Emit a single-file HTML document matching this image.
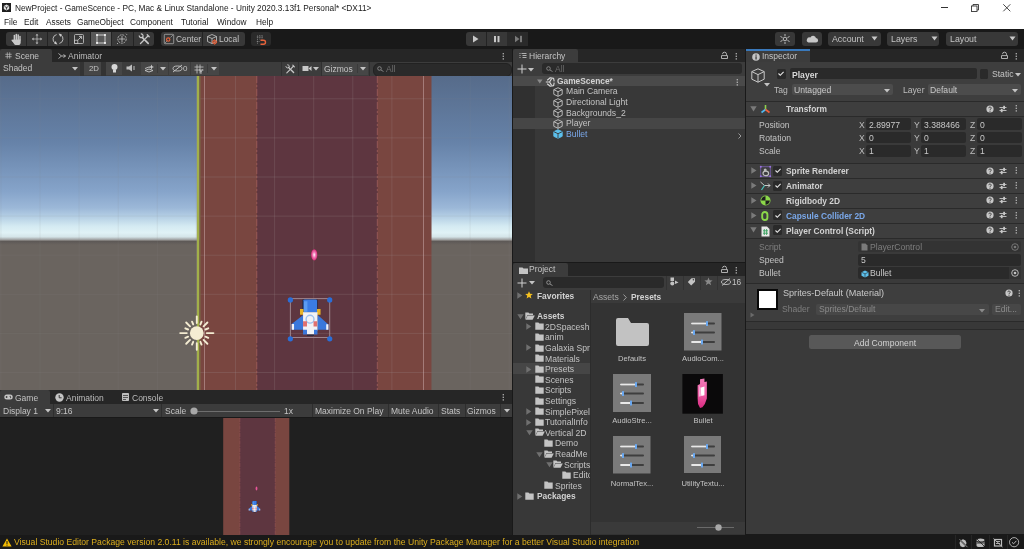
<!DOCTYPE html>
<html><head><meta charset="utf-8"><style>
html,body{margin:0;padding:0;width:1024px;height:549px;overflow:hidden;background:#191919;position:relative;}
body *{position:absolute;}
.t{font-family:"Liberation Sans",sans-serif;white-space:nowrap;will-change:transform;}
svg{overflow:visible;}
svg *{position:static;}
</style></head><body>
<div style="left:0px;top:0px;width:1024px;height:29px;background:#ffffff;"></div>
<div style="left:2px;top:3px;width:9px;height:9px;background:#1e1e1e;"></div>
<svg style="left:3px;top:4px;" width="7" height="7" viewBox="0 0 7 7"><path d="M3.5 0.6L6.2 2.1V5L3.5 6.5L0.8 5V2.1Z" fill="#e0e0e0"/><path d="M3.5 3.5L5.4 2.5M3.5 3.5V5.6M3.5 3.5L1.6 2.5" stroke="#1e1e1e" stroke-width="0.8"/></svg>
<span class="t" style="left:14.5px;top:4.47px;font-size:8.3px;line-height:8.3px;color:#1a1a1a;font-weight:400;">NewProject - GameScence - PC, Mac &amp; Linux Standalone - Unity 2020.3.13f1 Personal* &lt;DX11&gt;</span>
<span class="t" style="left:4px;top:18.47px;font-size:8.3px;line-height:8.3px;color:#1a1a1a;font-weight:400;">File</span>
<span class="t" style="left:24px;top:18.47px;font-size:8.3px;line-height:8.3px;color:#1a1a1a;font-weight:400;">Edit</span>
<span class="t" style="left:46px;top:18.47px;font-size:8.3px;line-height:8.3px;color:#1a1a1a;font-weight:400;">Assets</span>
<span class="t" style="left:77px;top:18.47px;font-size:8.3px;line-height:8.3px;color:#1a1a1a;font-weight:400;">GameObject</span>
<span class="t" style="left:130px;top:18.47px;font-size:8.3px;line-height:8.3px;color:#1a1a1a;font-weight:400;">Component</span>
<span class="t" style="left:181px;top:18.47px;font-size:8.3px;line-height:8.3px;color:#1a1a1a;font-weight:400;">Tutorial</span>
<span class="t" style="left:217px;top:18.47px;font-size:8.3px;line-height:8.3px;color:#1a1a1a;font-weight:400;">Window</span>
<span class="t" style="left:256px;top:18.47px;font-size:8.3px;line-height:8.3px;color:#1a1a1a;font-weight:400;">Help</span>
<div style="left:941.3px;top:7px;width:7px;height:0.9px;background:#333;"></div>
<svg style="left:971px;top:4px;" width="8" height="8" viewBox="0 0 8 8"><rect x="0.5" y="2" width="5.5" height="5.5" fill="none" stroke="#333" stroke-width="0.9"/><path d="M2 2V0.5H7.5V6H6" fill="none" stroke="#333" stroke-width="0.9"/></svg>
<svg style="left:1003px;top:3.8px;" width="8" height="8" viewBox="0 0 8 8"><path d="M0.3 0.3L7.3 7.3M7.3 0.3L0.3 7.3" stroke="#333" stroke-width="0.9"/></svg>
<div style="left:0px;top:29px;width:1024px;height:19.5px;background:#191919;"></div>
<div style="left:6px;top:32px;width:148px;height:14px;background:#383838;border-radius:3px"></div>
<div style="left:26px;top:32px;width:1px;height:14px;background:#232323;"></div>
<div style="left:47px;top:32px;width:1px;height:14px;background:#232323;"></div>
<div style="left:68px;top:32px;width:1px;height:14px;background:#232323;"></div>
<div style="left:90px;top:32px;width:1px;height:14px;background:#232323;"></div>
<div style="left:111px;top:32px;width:1px;height:14px;background:#232323;"></div>
<div style="left:133px;top:32px;width:1px;height:14px;background:#232323;"></div>
<div style="left:91px;top:32px;width:20px;height:14px;background:#585858;"></div>
<svg style="left:10px;top:33px;" width="13" height="13" viewBox="0 0 13 13"><g stroke="#c8c8c8" stroke-linecap="round" fill="none"><path d="M4.4 7V2.6" stroke-width="1.5"/><path d="M6.3 6.6V1.4" stroke-width="1.5"/><path d="M8.2 6.6V2" stroke-width="1.5"/><path d="M10 7V3.4" stroke-width="1.4"/><path d="M2.2 7.2L3.6 8.6" stroke-width="1.5"/></g><path d="M3.6 6.4H10.7V9.4C10.7 11 9.6 12 8 12H6.4C5.2 12 4.4 11.4 3.8 10.4L2 7.6Z" fill="#c8c8c8"/></svg>
<svg style="left:31px;top:33px;" width="12" height="12" viewBox="0 0 12 12"><path d="M6 0.8L4.6 2.6H7.4Z M6 11.2L4.6 9.4H7.4Z M0.8 6L2.6 4.6V7.4Z M11.2 6L9.4 4.6V7.4Z" fill="#c8c8c8"/><path d="M6 2.4V9.6M2.4 6H9.6" stroke="#c8c8c8" stroke-width="0.7"/></svg>
<svg style="left:52px;top:33px;" width="12" height="12" viewBox="0 0 12 12"><path d="M4.6 1.6A4.6 4.6 0 0 0 3.2 10" fill="none" stroke="#c8c8c8" stroke-width="0.9"/><path d="M7.4 10.4A4.6 4.6 0 0 0 8.8 2" fill="none" stroke="#c8c8c8" stroke-width="0.9"/><path d="M6.6 0.6L9.8 1.2L8.4 4Z M5.4 11.4L2.2 10.8L3.6 8Z" fill="#c8c8c8"/></svg>
<svg style="left:73px;top:33px;" width="12" height="12" viewBox="0 0 12 12"><rect x="1.5" y="1.5" width="9" height="9" rx="1" fill="none" stroke="#c8c8c8" stroke-width="0.8"/><rect x="1.5" y="7.2" width="3.3" height="3.3" fill="none" stroke="#c8c8c8" stroke-width="0.8"/><path d="M5.2 6.8L8.4 3.6M6 3.4H8.6V6" fill="none" stroke="#c8c8c8" stroke-width="0.9"/></svg>
<svg style="left:95px;top:33px;" width="12" height="12" viewBox="0 0 12 12"><rect x="2" y="2" width="8" height="8" fill="none" stroke="#e8e8e8" stroke-width="0.8"/><circle cx="2" cy="2" r="1" fill="#fff"/><circle cx="10" cy="2" r="1" fill="#fff"/><circle cx="2" cy="10" r="1" fill="#fff"/><circle cx="10" cy="10" r="1" fill="#fff"/></svg>
<svg style="left:116px;top:33px;" width="12" height="12" viewBox="0 0 12 12"><circle cx="6" cy="6" r="4.2" fill="none" stroke="#c8c8c8" stroke-width="0.8" stroke-dasharray="2 0.8"/><path d="M6 3V9M3 6H9" stroke="#c8c8c8" stroke-width="0.8"/><path d="M10 0.8L11 1.8M1 11L2 10" stroke="#c8c8c8" stroke-width="0.8"/></svg>
<svg style="left:138px;top:33px;" width="12" height="12" viewBox="0 0 12 12"><path d="M2.5 10.5L6.5 6.5M7.6 5.4L10.2 2.8M9.2 1.8L11.2 3.8" stroke="#c8c8c8" stroke-width="1.3" stroke-linecap="round"/><path d="M4.2 4.4L10.2 10.4" stroke="#c8c8c8" stroke-width="1.6" stroke-linecap="round"/><path d="M1.2 2.6A2 2 0 0 0 4.2 4.4L5 3.6A2 2 0 0 0 2.8 1" fill="none" stroke="#c8c8c8" stroke-width="1.2"/></svg>
<div style="left:161px;top:32px;width:84px;height:14px;background:#383838;border-radius:3px"></div>
<div style="left:202px;top:32px;width:1px;height:14px;background:#232323;"></div>
<svg style="left:163px;top:33px;" width="12" height="12" viewBox="0 0 12 12"><rect x="1.3" y="1.3" width="9.4" height="9.4" rx="0.8" fill="none" stroke="#a8a8a8" stroke-width="0.8"/><path d="M2 10L4.5 7.5M7.5 4.5L10 2" stroke="#a8a8a8" stroke-width="0.7"/><circle cx="5.2" cy="6.6" r="1.7" fill="none" stroke="#e8623a" stroke-width="1.1"/></svg>
<span class="t" style="left:175.5px;top:35.39px;font-size:8.4px;line-height:8.4px;color:#c4c4c4;font-weight:400;">Center</span>
<svg style="left:206px;top:33px;" width="12" height="12" viewBox="0 0 12 12"><path d="M1.5 3.5L6 1.5L10.5 3.5V8.5L6 10.5L1.5 8.5Z M1.5 3.5L6 5.5L10.5 3.5 M6 5.5V10.5" fill="none" stroke="#c8c8c8" stroke-width="0.8"/><circle cx="8.6" cy="9" r="1.9" fill="none" stroke="#e8623a" stroke-width="1"/><path d="M8.6 6.5V11.5M6.1 9H11.1" stroke="#e8623a" stroke-width="0.7"/></svg>
<span class="t" style="left:219px;top:35.39px;font-size:8.4px;line-height:8.4px;color:#c4c4c4;font-weight:400;">Local</span>
<div style="left:251px;top:32px;width:20px;height:14px;background:#2a2a2a;border-radius:3px"></div>
<svg style="left:256px;top:33.5px;" width="11" height="11" viewBox="0 0 11 11"><path d="M1.5 1.5V10M3.8 1V5.5M6 1V5.5" stroke="#9a9a9a" stroke-width="0.7" stroke-dasharray="1 0.8"/><path d="M0.8 3H7M0.8 7.5H3.5" stroke="#9a9a9a" stroke-width="0.7" stroke-dasharray="1 0.8"/><path d="M4.5 6.2H7.5A2 2 0 0 1 7.5 10.2H4.5" fill="none" stroke="#e8623a" stroke-width="1.4"/></svg>
<div style="left:466px;top:32px;width:62px;height:14px;background:#383838;border-radius:3px"></div>
<div style="left:486px;top:32px;width:1px;height:14px;background:#232323;"></div>
<div style="left:507px;top:32px;width:21px;height:14px;background:#2a2a2a;"></div>
<svg style="left:466px;top:32px;" width="62" height="14" viewBox="0 0 62 14"><path d="M7 3.5L12.5 7L7 10.5Z" fill="#c8c8c8"/><rect x="28" y="4" width="2" height="6.2" fill="#c8c8c8"/><rect x="31.5" y="4" width="2" height="6.2" fill="#c8c8c8"/><path d="M49 3.8L53.5 7L49 10.2Z" fill="#7a7a7a"/><rect x="54" y="3.8" width="2" height="6.4" fill="#7a7a7a"/></svg>
<div style="left:775px;top:32px;width:20px;height:14px;background:#383838;border-radius:3px"></div>
<div style="left:802px;top:32px;width:20px;height:14px;background:#383838;border-radius:3px"></div>
<div style="left:828px;top:32px;width:52.5px;height:14px;background:#383838;border-radius:3px"></div>
<div style="left:887px;top:32px;width:52px;height:14px;background:#383838;border-radius:3px"></div>
<div style="left:946px;top:32px;width:71.5px;height:14px;background:#383838;border-radius:3px"></div>
<svg style="left:779px;top:33px;" width="12" height="12" viewBox="0 0 12 12"><circle cx="6" cy="6" r="1.8" fill="none" stroke="#c8c8c8" stroke-width="0.9"/><path d="M6 1V3M6 9V11M1.5 3.5L3.5 4.6M10.5 3.5L8.5 4.6M1.5 8.5L3.5 7.4M10.5 8.5L8.5 7.4" stroke="#c8c8c8" stroke-width="0.9"/></svg>
<svg style="left:806px;top:33px;" width="12" height="12" viewBox="0 0 12 12"><path d="M2.5 9.5H9.8A2.2 2.2 0 0 0 10 5.1A3 3 0 0 0 4.3 4.6A2.5 2.5 0 0 0 2.5 9.5Z" fill="#c8c8c8"/></svg>
<span class="t" style="left:832px;top:35.05px;font-size:8.8px;line-height:8.8px;color:#c4c4c4;font-weight:400;">Account</span>
<span class="t" style="left:891px;top:35.05px;font-size:8.8px;line-height:8.8px;color:#c4c4c4;font-weight:400;">Layers</span>
<span class="t" style="left:949.5px;top:35.05px;font-size:8.8px;line-height:8.8px;color:#c4c4c4;font-weight:400;">Layout</span>
<svg style="left:871px;top:36px;" width="7" height="5" viewBox="0 0 7 5"><path d="M0.5 0.5H6.5L3.5 4.5Z" fill="#c8c8c8"/></svg>
<svg style="left:931px;top:36px;" width="7" height="5" viewBox="0 0 7 5"><path d="M0.5 0.5H6.5L3.5 4.5Z" fill="#c8c8c8"/></svg>
<svg style="left:1009px;top:36px;" width="7" height="5" viewBox="0 0 7 5"><path d="M0.5 0.5H6.5L3.5 4.5Z" fill="#c8c8c8"/></svg>
<div style="left:0px;top:48.5px;width:512px;height:13px;background:#262626;"></div>
<div style="left:0;top:49px;width:51.5px;height:12.5px;background:#3c3c3c;border-radius:2px 2px 0 0"></div>
<svg style="left:4.5px;top:51.5px;" width="7" height="7" viewBox="0 0 7 7"><path d="M2.3 0.3V6.7M4.7 0.3V6.7M0.3 2.3H6.7M0.3 4.7H6.7" stroke="#bdbdbd" stroke-width="0.7"/></svg>
<span class="t" style="left:15px;top:52.05px;font-size:8.5px;line-height:8.5px;color:#c4c4c4;font-weight:400;">Scene</span>
<svg style="left:58px;top:53px;" width="8" height="6" viewBox="0 0 8 6"><path d="M0.5 0.5L3.5 3L0.5 5.5M3.5 3H7.5M5.5 1.5L7.5 3L5.5 4.5" stroke="#bdbdbd" stroke-width="0.9" fill="none"/></svg>
<span class="t" style="left:68px;top:52.05px;font-size:8.5px;line-height:8.5px;color:#bdbdbd;font-weight:400;">Animator</span>
<svg style="left:502px;top:51.5px;" width="3" height="9" viewBox="0 0 3 9"><rect x="0.7" y="1" width="1.1" height="1.4" fill="#c4c4c4"/><rect x="0.7" y="3.6" width="1.1" height="1.4" fill="#c4c4c4"/><rect x="0.7" y="6.2" width="1.1" height="1.4" fill="#c4c4c4"/></svg>
<div style="left:0px;top:61.5px;width:512px;height:14px;background:#3c3c3c;"></div>
<span class="t" style="left:3px;top:64.30px;font-size:8.5px;line-height:8.5px;color:#c4c4c4;font-weight:400;">Shaded</span>
<svg style="left:72px;top:67px;" width="6" height="4" viewBox="0 0 6 4"><path d="M0 0H6L3 3.6Z" fill="#c4c4c4"/></svg>
<div style="left:80px;top:61.5px;width:4px;height:14px;background:#333333;"></div>
<div style="left:84px;top:62px;width:17px;height:13px;background:#464646;"></div>
<span class="t" style="left:89px;top:64.90px;font-size:7.8px;line-height:7.8px;color:#c4c4c4;font-weight:400;">2D</span>
<div style="left:101px;top:61.5px;width:5px;height:14px;background:#333333;"></div>
<div style="left:106px;top:62px;width:16px;height:13px;background:#464646;"></div>
<svg style="left:110px;top:63px;" width="9" height="11" viewBox="0 0 9 11"><circle cx="4.5" cy="4" r="3" fill="#d8d8d8"/><rect x="3" y="6.5" width="3" height="3" fill="#d8d8d8"/></svg>
<svg style="left:126px;top:64px;" width="10" height="8" viewBox="0 0 10 8"><path d="M0.5 2.5H3L6 0.5V7.5L3 5.5H0.5Z" fill="#bdbdbd"/><path d="M8 2V6" stroke="#bdbdbd" stroke-width="1"/></svg>
<div style="left:140.5px;top:62px;width:27.5px;height:13px;background:#464646;"></div>
<svg style="left:144px;top:63.5px;" width="10" height="10" viewBox="0 0 10 10"><path d="M1 6.5L5 5L9 6.5L5 8Z M1 4.5L5 3L6 3.4" fill="none" stroke="#c8c8c8" stroke-width="0.9"/><path d="M7.5 0.5L8.2 2.3L10 3L8.2 3.7L7.5 5.5L6.8 3.7L5 3L6.8 2.3Z" fill="#c8c8c8"/></svg>
<div style="left:157px;top:64px;width:0.7px;height:9px;background:#3a3a3a;"></div>
<svg style="left:159.5px;top:67px;" width="6" height="4" viewBox="0 0 6 4"><path d="M0 0H6L3 3.6Z" fill="#c4c4c4"/></svg>
<div style="left:169px;top:62px;width:21px;height:13px;background:#464646;"></div>
<svg style="left:172px;top:64px;" width="11" height="9" viewBox="0 0 11 9"><ellipse cx="5.5" cy="4.5" rx="4.5" ry="2.5" fill="none" stroke="#c8c8c8" stroke-width="0.9"/><path d="M1 8L10 1" stroke="#c8c8c8" stroke-width="0.9"/></svg>
<span class="t" style="left:183px;top:65.23px;font-size:8px;line-height:8px;color:#c4c4c4;font-weight:400;">0</span>
<div style="left:191px;top:62px;width:28px;height:13px;background:#464646;"></div>
<svg style="left:194px;top:63.5px;" width="10" height="10" viewBox="0 0 10 10"><path d="M3 0.5V9.5M6 0.5V9.5M0.5 3H9.5M0.5 6H9.5" stroke="#c8c8c8" stroke-width="0.8"/><path d="M5.5 5.5L7 8L8.5 5.5M7 8V9.8" stroke="#c8c8c8" stroke-width="0.9" fill="none"/></svg>
<div style="left:207px;top:64px;width:0.7px;height:9px;background:#3a3a3a;"></div>
<svg style="left:210.5px;top:67px;" width="6" height="4" viewBox="0 0 6 4"><path d="M0 0H6L3 3.6Z" fill="#c4c4c4"/></svg>
<div style="left:219px;top:61.5px;width:62px;height:14px;background:#3c3c3c;"></div>
<div style="left:281px;top:62px;width:17px;height:13px;background:#3c3c3c;"></div>
<svg style="left:284.5px;top:63.5px;" width="10" height="10" viewBox="0 0 10 10"><path d="M1.8 8.8L5.3 5.3M6.3 4.3L8.6 2M7.8 1.2L9.4 2.8" stroke="#c8c8c8" stroke-width="1.1" stroke-linecap="round"/><path d="M3.6 3.6L8.6 8.6" stroke="#c8c8c8" stroke-width="1.4" stroke-linecap="round"/><path d="M0.9 2.2A1.7 1.7 0 0 0 3.6 3.6L4.2 3A1.7 1.7 0 0 0 2.3 0.8" fill="none" stroke="#c8c8c8" stroke-width="1"/></svg>
<div style="left:280.5px;top:61.5px;width:0.8px;height:14px;background:#303030;"></div>
<div style="left:298px;top:61.5px;width:0.8px;height:14px;background:#303030;"></div>
<div style="left:321.3px;top:61.5px;width:0.8px;height:14px;background:#303030;"></div>
<div style="left:369px;top:61.5px;width:0.8px;height:14px;background:#303030;"></div>
<svg style="left:302px;top:65px;" width="10" height="7" viewBox="0 0 10 7"><rect x="0.5" y="1" width="6" height="5" fill="#c8c8c8"/><path d="M6.5 3.5L9.5 1V6Z" fill="#c8c8c8"/></svg>
<svg style="left:313px;top:67px;" width="6" height="4" viewBox="0 0 6 4"><path d="M0 0H6L3 3.6Z" fill="#c4c4c4"/></svg>
<div style="left:322px;top:62px;width:46px;height:13px;background:#464646;"></div>
<span class="t" style="left:324px;top:64.50px;font-size:8.5px;line-height:8.5px;color:#c4c4c4;font-weight:400;">Gizmos</span>
<div style="left:357px;top:64px;width:0.7px;height:9px;background:#3a3a3a;"></div>
<svg style="left:359.5px;top:67px;" width="6" height="4" viewBox="0 0 6 4"><path d="M0 0H6L3 3.6Z" fill="#c4c4c4"/></svg>
<div style="left:373px;top:62.5px;width:137px;height:12px;background:#2a2a2a;border-radius:6px;border:0.5px solid #222"></div>
<svg style="left:377px;top:65.5px;" width="8" height="6" viewBox="0 0 8 6"><circle cx="2.5" cy="2.5" r="1.8" fill="none" stroke="#8a8a8a" stroke-width="0.9"/><path d="M4 4L6.5 5.5" stroke="#8a8a8a" stroke-width="0.9"/></svg>
<span class="t" style="left:386px;top:64.80px;font-size:8.5px;line-height:8.5px;color:#6e6e6e;font-weight:400;">All</span>
<svg style="left:0;top:75.5px" width="512" height="314.5" viewBox="0 0 512 314.5"><defs><linearGradient id="sky" x1="0" y1="0" x2="0" y2="1"><stop offset="0" stop-color="#566b8a"/><stop offset="0.4" stop-color="#6682a8"/><stop offset="0.7" stop-color="#86a4ca"/><stop offset="0.8" stop-color="#9cb8d8"/><stop offset="0.86" stop-color="#b8d2e6"/><stop offset="0.91" stop-color="#d4eaf2"/><stop offset="0.95" stop-color="#e0f2f6"/><stop offset="0.975" stop-color="#d4e4e8"/><stop offset="0.992" stop-color="#a0a2a2"/><stop offset="1" stop-color="#6e6864"/></linearGradient><linearGradient id="gnd" x1="0" y1="0" x2="0" y2="1"><stop offset="0" stop-color="#5c5856"/><stop offset="1" stop-color="#6a645f"/></linearGradient></defs><rect x="0" y="0" width="512" height="165" fill="url(#sky)"/><rect x="0" y="165" width="512" height="150" fill="#6a645f"/><rect x="0" y="165" width="512" height="4" fill="url(#gnd)"/><rect x="0.40" y="0" width="1" height="315" fill="#8c8c8c" fill-opacity="0.12"/><rect x="39.50" y="0" width="1" height="315" fill="#8c8c8c" fill-opacity="0.12"/><rect x="78.60" y="0" width="1" height="315" fill="#8c8c8c" fill-opacity="0.12"/><rect x="117.70" y="0" width="1" height="315" fill="#8c8c8c" fill-opacity="0.12"/><rect x="156.80" y="0" width="1" height="315" fill="#8c8c8c" fill-opacity="0.12"/><rect x="195.90" y="0" width="1" height="315" fill="#8c8c8c" fill-opacity="0.12"/><rect x="235.00" y="0" width="1" height="315" fill="#8c8c8c" fill-opacity="0.12"/><rect x="274.10" y="0" width="1" height="315" fill="#8c8c8c" fill-opacity="0.12"/><rect x="313.20" y="0" width="1" height="315" fill="#8c8c8c" fill-opacity="0.12"/><rect x="352.30" y="0" width="1" height="315" fill="#8c8c8c" fill-opacity="0.12"/><rect x="391.40" y="0" width="1" height="315" fill="#8c8c8c" fill-opacity="0.12"/><rect x="430.50" y="0" width="1" height="315" fill="#8c8c8c" fill-opacity="0.12"/><rect x="469.60" y="0" width="1" height="315" fill="#8c8c8c" fill-opacity="0.12"/><rect x="508.70" y="0" width="1" height="315" fill="#8c8c8c" fill-opacity="0.12"/><rect x="0" y="22.30" width="512" height="1" fill="#8c8c8c" fill-opacity="0.12"/><rect x="0" y="61.40" width="512" height="1" fill="#8c8c8c" fill-opacity="0.12"/><rect x="0" y="100.50" width="512" height="1" fill="#8c8c8c" fill-opacity="0.12"/><rect x="0" y="139.60" width="512" height="1" fill="#8c8c8c" fill-opacity="0.12"/><rect x="0" y="178.70" width="512" height="1" fill="#8c8c8c" fill-opacity="0.12"/><rect x="0" y="217.80" width="512" height="1" fill="#8c8c8c" fill-opacity="0.12"/><rect x="0" y="256.90" width="512" height="1" fill="#8c8c8c" fill-opacity="0.12"/><rect x="0" y="296.00" width="512" height="1" fill="#8c8c8c" fill-opacity="0.12"/><rect x="200" y="0" width="231.5" height="315" fill="#794640"/><rect x="257" y="0" width="120.5" height="315" fill="#5e3640"/><rect x="195.90" y="0" width="1" height="315" fill="#a09090" fill-opacity="0.22"/><rect x="235.00" y="0" width="1" height="315" fill="#a09090" fill-opacity="0.22"/><rect x="274.10" y="0" width="1" height="315" fill="#a09090" fill-opacity="0.22"/><rect x="313.20" y="0" width="1" height="315" fill="#a09090" fill-opacity="0.22"/><rect x="352.30" y="0" width="1" height="315" fill="#a09090" fill-opacity="0.22"/><rect x="391.40" y="0" width="1" height="315" fill="#a09090" fill-opacity="0.22"/><rect x="199.5" y="22.30" width="232" height="1" fill="#a09090" fill-opacity="0.22"/><rect x="199.5" y="61.40" width="232" height="1" fill="#a09090" fill-opacity="0.22"/><rect x="199.5" y="100.50" width="232" height="1" fill="#a09090" fill-opacity="0.22"/><rect x="199.5" y="139.60" width="232" height="1" fill="#a09090" fill-opacity="0.22"/><rect x="199.5" y="178.70" width="232" height="1" fill="#a09090" fill-opacity="0.22"/><rect x="199.5" y="217.80" width="232" height="1" fill="#a09090" fill-opacity="0.22"/><rect x="199.5" y="256.90" width="232" height="1" fill="#a09090" fill-opacity="0.22"/><rect x="199.5" y="296.00" width="232" height="1" fill="#a09090" fill-opacity="0.22"/><path d="M256.8 0V315M377.3 0V315" stroke="#a8625f" stroke-width="1" stroke-dasharray="7 2 2 2" stroke-opacity="0.7"/><rect x="204" y="0" width="1" height="315" fill="#d0b0b0" fill-opacity="0.5"/><rect x="423" y="0" width="1" height="315" fill="#d0b0b0" fill-opacity="0.5"/><rect x="196.9" y="0" width="2.2" height="315" fill="#a2b04a"/><rect x="199.1" y="0" width="1.4" height="315" fill="#7a6a44"/><g transform="translate(196.8,257.1)" stroke="#f4ecd2" stroke-width="1.9" stroke-linecap="round"><line x1="10.00" y1="0.00" x2="16.60" y2="0.00"/><line x1="8.68" y1="3.60" x2="11.46" y2="4.75"/><line x1="6.79" y1="6.79" x2="10.61" y2="10.61"/><line x1="3.60" y1="8.68" x2="4.75" y2="11.46"/><line x1="0.00" y1="10.00" x2="0.00" y2="16.60"/><line x1="-3.60" y1="8.68" x2="-4.75" y2="11.46"/><line x1="-6.79" y1="6.79" x2="-10.61" y2="10.61"/><line x1="-8.68" y1="3.60" x2="-11.46" y2="4.75"/><line x1="-10.00" y1="0.00" x2="-16.60" y2="0.00"/><line x1="-8.68" y1="-3.60" x2="-11.46" y2="-4.75"/><line x1="-6.79" y1="-6.79" x2="-10.61" y2="-10.61"/><line x1="-3.60" y1="-8.68" x2="-4.75" y2="-11.46"/><line x1="-0.00" y1="-10.00" x2="-0.00" y2="-16.60"/><line x1="3.60" y1="-8.68" x2="4.75" y2="-11.46"/><line x1="6.79" y1="-6.79" x2="10.61" y2="-10.61"/><line x1="8.68" y1="-3.60" x2="11.46" y2="-4.75"/></g><circle cx="196.8" cy="257.1" r="6.9" fill="#f4ecd2"/><defs><radialGradient id="bul"><stop offset="0" stop-color="#ffffff"/><stop offset="0.45" stop-color="#f080b8"/><stop offset="1" stop-color="#d82a78"/></radialGradient></defs><ellipse cx="314.2" cy="178.8" rx="3.1" ry="5.6" fill="url(#bul)"/></svg>
<svg style="left:286px;top:296px" width="48" height="48" viewBox="0 0 549 549"><rect x="50" y="30" width="450" height="445" fill="none" stroke="#a08890" stroke-width="11"/><path d="M188 40H362V190H188Z" fill="#1c2a48"/><path d="M200 48Q200 40 215 40H340Q355 40 355 55V185H200Z" fill="#3b7ce4"/><rect x="205" y="60" width="40" height="120" fill="#5b9cf2"/><path d="M160 150H200V215H160Z M355 150H395V215H355Z" fill="#e8b428"/><path d="M200 215L65 320V385H200Z M360 215L485 325V385H360Z" fill="#3a78dc"/><path d="M65 320H92V385H65Z M460 322H485V385H460Z" fill="#f4f4f8"/><path d="M195 185H360V395H195Z" fill="#f2f2f6"/><circle cx="275" cy="265" r="45" fill="none" stroke="#9cc0f0" stroke-width="16"/><path d="M195 290H240V350H195Z M315 290H355V350H315Z" fill="#e07070"/><path d="M195 385H240V440H195Z M320 385H360V440H320Z" fill="#3a78dc"/><path d="M240 385H320V440H240Z" fill="#f2f2f6"/><path d="M240 440H320V458H240Z" fill="#2a2a40"/><circle cx="50" cy="45" r="30" fill="#2a6ed8"/><circle cx="500" cy="45" r="30" fill="#2a6ed8"/><circle cx="50" cy="490" r="30" fill="#2a6ed8"/><circle cx="500" cy="490" r="30" fill="#2a6ed8"/></svg>
<div style="left:0px;top:389.7px;width:512px;height:14.1px;background:#262626;"></div>
<div style="left:0;top:390px;width:49.5px;height:13.8px;background:#3c3c3c;border-radius:2px 2px 0 0"></div>
<svg style="left:4px;top:394px;" width="9" height="6" viewBox="0 0 9 6"><rect x="0.3" y="0.5" width="8.4" height="5" rx="2.5" fill="#c4c4c4"/><circle cx="2.6" cy="3" r="0.9" fill="#3c3c3c"/><circle cx="6.2" cy="2.4" r="0.6" fill="#3c3c3c"/><circle cx="6.6" cy="3.6" r="0.6" fill="#3c3c3c"/></svg>
<span class="t" style="left:15px;top:394.20px;font-size:8.5px;line-height:8.5px;color:#c4c4c4;font-weight:400;">Game</span>
<svg style="left:55px;top:393px;" width="9" height="9" viewBox="0 0 9 9"><circle cx="4.5" cy="4.5" r="4.2" fill="#c4c4c4"/><path d="M4.2 2V4.8H6.6" stroke="#262626" stroke-width="0.9" fill="none"/></svg>
<span class="t" style="left:66px;top:394.20px;font-size:8.5px;line-height:8.5px;color:#bdbdbd;font-weight:400;">Animation</span>
<svg style="left:122px;top:393px;" width="7" height="8" viewBox="0 0 7 8"><rect x="0" y="0" width="7" height="8" rx="0.8" fill="#bdbdbd"/><path d="M1 2.5H6M1 4.5H6M1 6.5H4" stroke="#262626" stroke-width="0.7"/></svg>
<span class="t" style="left:132px;top:394.20px;font-size:8.5px;line-height:8.5px;color:#bdbdbd;font-weight:400;">Console</span>
<svg style="left:502px;top:393px;" width="3" height="9" viewBox="0 0 3 9"><rect x="0.7" y="1" width="1.1" height="1.4" fill="#c4c4c4"/><rect x="0.7" y="3.6" width="1.1" height="1.4" fill="#c4c4c4"/><rect x="0.7" y="6.2" width="1.1" height="1.4" fill="#c4c4c4"/></svg>
<div style="left:0px;top:403.8px;width:512px;height:13.7px;background:#3c3c3c;"></div>
<div style="left:52.5px;top:403.8px;width:1px;height:13.7px;background:#2e2e2e;"></div>
<div style="left:160.5px;top:403.8px;width:1px;height:13.7px;background:#2e2e2e;"></div>
<div style="left:311.5px;top:403.8px;width:1px;height:13.7px;background:#2e2e2e;"></div>
<div style="left:387.5px;top:403.8px;width:1px;height:13.7px;background:#2e2e2e;"></div>
<div style="left:438px;top:403.8px;width:1px;height:13.7px;background:#2e2e2e;"></div>
<div style="left:464.5px;top:403.8px;width:1px;height:13.7px;background:#2e2e2e;"></div>
<div style="left:500px;top:403.8px;width:1px;height:13.7px;background:#2e2e2e;"></div>
<span class="t" style="left:3px;top:407.10px;font-size:8.5px;line-height:8.5px;color:#c4c4c4;font-weight:400;">Display 1</span>
<svg style="left:45px;top:409px;" width="6" height="4" viewBox="0 0 6 4"><path d="M0 0H6L3 3.6Z" fill="#c4c4c4"/></svg>
<span class="t" style="left:56px;top:407.10px;font-size:8.5px;line-height:8.5px;color:#c4c4c4;font-weight:400;">9:16</span>
<svg style="left:152.5px;top:409px;" width="6" height="4" viewBox="0 0 6 4"><path d="M0 0H6L3 3.6Z" fill="#c4c4c4"/></svg>
<span class="t" style="left:165px;top:407.30px;font-size:8.5px;line-height:8.5px;color:#c4c4c4;font-weight:400;">Scale</span>
<div style="left:193px;top:410.5px;width:87px;height:1px;background:#6e6e6e;"></div>
<svg style="left:189.5px;top:407px;" width="8" height="8" viewBox="0 0 8 8"><circle cx="4" cy="4" r="3.6" fill="#a8a8a8"/></svg>
<span class="t" style="left:284px;top:407.30px;font-size:8.5px;line-height:8.5px;color:#c4c4c4;font-weight:400;">1x</span>
<span class="t" style="left:315px;top:407.10px;font-size:8.5px;line-height:8.5px;color:#c4c4c4;font-weight:400;">Maximize On Play</span>
<span class="t" style="left:391px;top:407.10px;font-size:8.5px;line-height:8.5px;color:#c4c4c4;font-weight:400;">Mute Audio</span>
<span class="t" style="left:441px;top:407.10px;font-size:8.5px;line-height:8.5px;color:#c4c4c4;font-weight:400;">Stats</span>
<span class="t" style="left:467px;top:407.10px;font-size:8.5px;line-height:8.5px;color:#c4c4c4;font-weight:400;">Gizmos</span>
<svg style="left:504px;top:409px;" width="6" height="4" viewBox="0 0 6 4"><path d="M0 0H6L3 3.6Z" fill="#c4c4c4"/></svg>
<div style="left:0px;top:417.5px;width:512px;height:117px;background:#202020;"></div>
<svg style="left:0;top:417.5px" width="512" height="117" viewBox="0 0 512 117"><rect x="223.2" y="0" width="66.1" height="117" fill="#794640"/><rect x="239.9" y="0" width="35.3" height="117" fill="#5e3640"/><path d="M239.9 0V117M275.2 0V117" stroke="#a45c5e" stroke-width="0.6" stroke-dasharray="4 1 1.5 1" stroke-opacity="0.7"/><ellipse cx="256.5" cy="70.4" rx="0.9" ry="2" fill="#e8559a"/></svg>
<svg style="left:247.3px;top:500px" width="14.9" height="14.9" viewBox="0 0 549 549"><path d="M188 40H362V190H188Z" fill="#1c2a48"/><path d="M200 48Q200 40 215 40H340Q355 40 355 55V185H200Z" fill="#3b7ce4"/><rect x="205" y="60" width="40" height="120" fill="#5b9cf2"/><path d="M160 150H200V215H160Z M355 150H395V215H355Z" fill="#e8b428"/><path d="M200 215L65 320V385H200Z M360 215L485 325V385H360Z" fill="#3a78dc"/><path d="M65 320H92V385H65Z M460 322H485V385H460Z" fill="#f4f4f8"/><path d="M195 185H360V395H195Z" fill="#f2f2f6"/><circle cx="275" cy="265" r="45" fill="none" stroke="#9cc0f0" stroke-width="16"/><path d="M195 290H240V350H195Z M315 290H355V350H315Z" fill="#e07070"/><path d="M195 385H240V440H195Z M320 385H360V440H320Z" fill="#3a78dc"/><path d="M240 385H320V440H240Z" fill="#f2f2f6"/><path d="M240 440H320V458H240Z" fill="#2a2a40"/></svg>
<div style="left:512px;top:48.5px;width:1px;height:486px;background:#191919;"></div>
<div style="left:513px;top:48.5px;width:231.5px;height:13px;background:#262626;"></div>
<div style="left:513px;top:49px;width:64.5px;height:12.6px;background:#3c3c3c;border-radius:2px 2px 0 0"></div>
<svg style="left:519px;top:53px;" width="8" height="6" viewBox="0 0 8 6"><path d="M0.5 0.5H1.5M0.5 2.5H1.5M0.5 4.5H1.5M2.5 0.5H7.5M3.5 2.5H7.5M3.5 4.5H7.5" stroke="#bdbdbd" stroke-width="0.9"/></svg>
<span class="t" style="left:529px;top:51.80px;font-size:8.5px;line-height:8.5px;color:#c4c4c4;font-weight:400;">Hierarchy</span>
<svg style="left:720.5px;top:51.5px;" width="7" height="7" viewBox="0 0 7 7"><path d="M1.5 2.2A2 2 0 0 1 5.5 2.2V3.6" fill="none" stroke="#bdbdbd" stroke-width="0.9"/><path d="M0.5 3.6H6.5V6.5H0.5Z" fill="none" stroke="#bdbdbd" stroke-width="0.9"/></svg>
<svg style="left:735px;top:51.5px;" width="3" height="9" viewBox="0 0 3 9"><rect x="0.7" y="1" width="1.1" height="1.4" fill="#c4c4c4"/><rect x="0.7" y="3.6" width="1.1" height="1.4" fill="#c4c4c4"/><rect x="0.7" y="6.2" width="1.1" height="1.4" fill="#c4c4c4"/></svg>
<div style="left:513px;top:61.6px;width:231.5px;height:14.4px;background:#3c3c3c;"></div>
<svg style="left:517px;top:64px;" width="10" height="10" viewBox="0 0 10 10"><path d="M5 0.5V9.5M0.5 5H9.5" stroke="#d0d0d0" stroke-width="1"/></svg>
<svg style="left:528px;top:67.5px;" width="6" height="4" viewBox="0 0 6 4"><path d="M0 0H6L3 3.6Z" fill="#c4c4c4"/></svg>
<div style="left:542.3px;top:62.9px;width:200px;height:10.9px;background:#2a2a2a;border-radius:3px"></div>
<svg style="left:546px;top:65.5px;" width="8" height="6" viewBox="0 0 8 6"><circle cx="2.5" cy="2.5" r="1.8" fill="none" stroke="#8a8a8a" stroke-width="0.9"/><path d="M4 4L6.5 5.5" stroke="#8a8a8a" stroke-width="0.9"/></svg>
<span class="t" style="left:554.5px;top:65.10px;font-size:8.5px;line-height:8.5px;color:#6a6a6a;font-weight:400;">All</span>
<div style="left:513px;top:76px;width:231.5px;height:458.5px;background:#383838;"></div>
<div style="left:513px;top:86px;width:21.5px;height:448.5px;background:#303030;"></div>
<div style="left:513px;top:76px;width:231.5px;height:9.7px;background:#4a4a4a;"></div>
<svg style="left:537px;top:79px;" width="6" height="5" viewBox="0 0 6 5"><path d="M0 0.5H5.5L2.75 4.5Z" fill="#8a8a8a"/></svg>
<svg style="left:544.5px;top:76.5px;" width="10" height="10" viewBox="0 0 10 10"><g fill="none" stroke="#d8d8d8" stroke-width="1.1" stroke-linejoin="round"><path d="M0.8 5H4.6L6.6 1.6M4.6 5L6.6 8.4"/><path d="M2.2 3.2L5.2 0.8L8.6 1.4L9.2 4.4M9.2 5.6L8.6 8.6L5.2 9.2L2.2 6.8"/></g></svg>
<span class="t" style="left:556.5px;top:76.99px;font-size:8.4px;line-height:8.4px;color:#d2d2d2;font-weight:700;">GameScence*</span>
<svg style="left:735.5px;top:78px;" width="3" height="9" viewBox="0 0 3 9"><rect x="0.7" y="1" width="1.1" height="1.4" fill="#c4c4c4"/><rect x="0.7" y="3.6" width="1.1" height="1.4" fill="#c4c4c4"/><rect x="0.7" y="6.2" width="1.1" height="1.4" fill="#c4c4c4"/></svg>
<div style="left:513px;top:118px;width:231.5px;height:10.7px;background:#464646;"></div>
<svg style="left:553px;top:87.1px;" width="10" height="10" viewBox="0 0 10 10"><path d="M5 0.7L9.2 2.7V7.3L5 9.3L0.8 7.3V2.7Z" fill="none" stroke="#c4c4c4" stroke-width="0.9"/><path d="M0.8 2.7L5 4.7L9.2 2.7M5 4.7V9.3" fill="none" stroke="#c4c4c4" stroke-width="0.9"/></svg>
<span class="t" style="left:565.6px;top:87.22px;font-size:8.6px;line-height:8.6px;color:#c4c4c4;font-weight:400;">Main Camera</span>
<svg style="left:553px;top:97.75px;" width="10" height="10" viewBox="0 0 10 10"><path d="M5 0.7L9.2 2.7V7.3L5 9.3L0.8 7.3V2.7Z" fill="none" stroke="#c4c4c4" stroke-width="0.9"/><path d="M0.8 2.7L5 4.7L9.2 2.7M5 4.7V9.3" fill="none" stroke="#c4c4c4" stroke-width="0.9"/></svg>
<span class="t" style="left:565.6px;top:97.87px;font-size:8.6px;line-height:8.6px;color:#c4c4c4;font-weight:400;">Directional Light</span>
<svg style="left:553px;top:108.39999999999999px;" width="10" height="10" viewBox="0 0 10 10"><path d="M5 0.7L9.2 2.7V7.3L5 9.3L0.8 7.3V2.7Z" fill="none" stroke="#c4c4c4" stroke-width="0.9"/><path d="M0.8 2.7L5 4.7L9.2 2.7M5 4.7V9.3" fill="none" stroke="#c4c4c4" stroke-width="0.9"/></svg>
<span class="t" style="left:565.6px;top:108.52px;font-size:8.6px;line-height:8.6px;color:#c4c4c4;font-weight:400;">Backgrounds_2</span>
<svg style="left:553px;top:119.05px;" width="10" height="10" viewBox="0 0 10 10"><path d="M5 0.7L9.2 2.7V7.3L5 9.3L0.8 7.3V2.7Z" fill="none" stroke="#c4c4c4" stroke-width="0.9"/><path d="M0.8 2.7L5 4.7L9.2 2.7M5 4.7V9.3" fill="none" stroke="#c4c4c4" stroke-width="0.9"/></svg>
<span class="t" style="left:565.6px;top:119.17px;font-size:8.6px;line-height:8.6px;color:#c4c4c4;font-weight:400;">Player</span>
<svg style="left:553px;top:129.4px;" width="10" height="10" viewBox="0 0 10 10"><path d="M5 0.7L9.2 2.7V7.3L5 9.3L0.8 7.3V2.7Z" fill="#5cc0ec" stroke="#5cc0ec" stroke-width="0.9"/><path d="M0.8 2.7L5 4.7L9.2 2.7M5 4.7V9.3" fill="none" stroke="#383838" stroke-width="0.9"/></svg>
<span class="t" style="left:565.6px;top:129.52px;font-size:8.6px;line-height:8.6px;color:#7aa8ea;font-weight:400;">Bullet</span>
<svg style="left:738px;top:132.5px;" width="4" height="6" viewBox="0 0 4 6"><path d="M0.5 0.5L3 3L0.5 5.5" fill="none" stroke="#a8a8a8" stroke-width="0.9"/></svg>
<div style="left:513px;top:261.5px;width:231.5px;height:2px;background:#191919;"></div>
<div style="left:513px;top:263.3px;width:231.5px;height:12.3px;background:#262626;"></div>
<div style="left:513px;top:263.3px;width:54.7px;height:12.3px;background:#3c3c3c;border-radius:2px 2px 0 0"></div>
<svg style="left:519px;top:266.5px;" width="9" height="7" viewBox="0 0 9 7"><path d="M0 0.5H3.5L4.5 1.5H9V7H0Z" fill="#c4c4c4"/></svg>
<span class="t" style="left:529px;top:265.40px;font-size:8.5px;line-height:8.5px;color:#c4c4c4;font-weight:400;">Project</span>
<svg style="left:720.5px;top:266px;" width="7" height="7" viewBox="0 0 7 7"><path d="M1.5 2.2A2 2 0 0 1 5.5 2.2V3.6" fill="none" stroke="#bdbdbd" stroke-width="0.9"/><path d="M0.5 3.6H6.5V6.5H0.5Z" fill="none" stroke="#bdbdbd" stroke-width="0.9"/></svg>
<svg style="left:735px;top:266px;" width="3" height="9" viewBox="0 0 3 9"><rect x="0.7" y="1" width="1.1" height="1.4" fill="#c4c4c4"/><rect x="0.7" y="3.6" width="1.1" height="1.4" fill="#c4c4c4"/><rect x="0.7" y="6.2" width="1.1" height="1.4" fill="#c4c4c4"/></svg>
<div style="left:513px;top:275.5px;width:231.5px;height:14px;background:#3c3c3c;"></div>
<svg style="left:517px;top:278px;" width="10" height="10" viewBox="0 0 10 10"><path d="M5 0.5V9.5M0.5 5H9.5" stroke="#d0d0d0" stroke-width="1"/></svg>
<svg style="left:528.5px;top:281px;" width="6" height="4" viewBox="0 0 6 4"><path d="M0 0H6L3 3.6Z" fill="#c4c4c4"/></svg>
<div style="left:543px;top:277px;width:120.7px;height:10.5px;background:#2a2a2a;border-radius:3px"></div>
<svg style="left:546px;top:279.5px;" width="8" height="6" viewBox="0 0 8 6"><circle cx="2.5" cy="2.5" r="1.8" fill="none" stroke="#9a9a9a" stroke-width="0.9"/><path d="M4 4L6.5 5.5" stroke="#9a9a9a" stroke-width="0.9"/></svg>
<div style="left:665.5px;top:276px;width:0.8px;height:13.5px;background:#333333;"></div>
<div style="left:682.5px;top:276px;width:0.8px;height:13.5px;background:#333333;"></div>
<div style="left:700px;top:276px;width:0.8px;height:13.5px;background:#333333;"></div>
<div style="left:717px;top:276px;width:0.8px;height:13.5px;background:#333333;"></div>
<svg style="left:670px;top:277px;" width="9" height="9" viewBox="0 0 9 9"><rect x="0.5" y="0.5" width="3.5" height="3.5" fill="#c4c4c4"/><circle cx="2.3" cy="6.6" r="2" fill="#c4c4c4"/><path d="M5 3.5L8.5 5.5L5 7Z" fill="#c4c4c4"/></svg>
<svg style="left:687px;top:277px;" width="9" height="9" viewBox="0 0 9 9"><path d="M0.8 5L4.5 1.2H8V4.7L4.2 8.5Z" fill="#c4c4c4"/><circle cx="6.4" cy="2.8" r="0.8" fill="#3c3c3c"/></svg>
<svg style="left:704px;top:277px;" width="9" height="9" viewBox="0 0 9 9"><path d="M4.5 0.5L5.6 3.3L8.6 3.4L6.3 5.3L7.1 8.3L4.5 6.6L1.9 8.3L2.7 5.3L0.4 3.4L3.4 3.3Z" fill="#8a8a8a"/></svg>
<svg style="left:721px;top:277.5px;" width="10" height="8" viewBox="0 0 10 8"><ellipse cx="5" cy="4" rx="4.5" ry="2.5" fill="none" stroke="#c4c4c4" stroke-width="0.9"/><path d="M1 7.5L9 0.5" stroke="#c4c4c4" stroke-width="0.9"/></svg>
<span class="t" style="left:732px;top:278.47px;font-size:8.3px;line-height:8.3px;color:#c4c4c4;font-weight:400;">16</span>
<div style="left:513px;top:289.5px;width:77px;height:245px;background:#383838;"></div>
<div style="left:590px;top:289.5px;width:0.8px;height:245px;background:#2c2c2c;"></div>
<div style="left:590.8px;top:289.5px;width:154px;height:245px;background:#333333;"></div>
<div style="left:513px;top:363.3px;width:77px;height:10.4px;background:#464646;"></div>
<svg style="left:517px;top:292.3px;" width="6" height="7" viewBox="0 0 6 7"><path d="M0.3 0.3L5.3 3.5L0.3 6.7Z" fill="#707070"/></svg>
<svg style="left:525px;top:290.8px;" width="8" height="8" viewBox="0 0 8 8"><path d="M4 0.3L5.1 2.8L7.8 3L5.7 4.8L6.4 7.6L4 6.1L1.6 7.6L2.3 4.8L0.2 3L2.9 2.8Z" fill="#f4c020"/></svg>
<span class="t" style="left:536.5px;top:291.59px;font-size:8.4px;line-height:8.4px;color:#d2d2d2;font-weight:700;">Favorites</span>
<div style="left:513px;top:300px;width:77px;height:234px;overflow:hidden">
<svg style="left:3.7px;top:13.699999999999978px;" width="7" height="6" viewBox="0 0 7 6"><path d="M0.3 0.3H6.7L3.5 5.3Z" fill="#707070"/></svg>
<svg style="left:12px;top:11.699999999999978px;" width="10" height="8" viewBox="0 0 10 8"><path d="M0.3 0.5H3.4L4.4 1.6H8V3H2.5L0.3 7.7Z" fill="#c4c4c4"/><path d="M2.6 3.6H9.8L7.6 7.7H0.5Z" fill="#c4c4c4"/></svg>
<span class="t" style="left:24px;top:12.29px;font-size:8.4px;line-height:8.4px;color:#d2d2d2;font-weight:700;">Assets</span>
<svg style="left:13px;top:23.2px;" width="6" height="7" viewBox="0 0 6 7"><path d="M0.3 0.3L5.3 3.5L0.3 6.7Z" fill="#707070"/></svg>
<svg style="left:21.5px;top:22.3px;" width="9" height="8" viewBox="0 0 9 8"><path d="M0.3 0.5H3.4L4.4 1.6H8.7V7.7H0.3Z" fill="#c4c4c4"/></svg>
<span class="t" style="left:32px;top:22.72px;font-size:8.6px;line-height:8.6px;color:#c4c4c4;font-weight:400;">2DSpacesh</span>
<svg style="left:21.5px;top:32.89999999999996px;" width="9" height="8" viewBox="0 0 9 8"><path d="M0.3 0.5H3.4L4.4 1.6H8.7V7.7H0.3Z" fill="#c4c4c4"/></svg>
<span class="t" style="left:32px;top:33.32px;font-size:8.6px;line-height:8.6px;color:#c4c4c4;font-weight:400;">anim</span>
<svg style="left:13px;top:44.39999999999999px;" width="6" height="7" viewBox="0 0 6 7"><path d="M0.3 0.3L5.3 3.5L0.3 6.7Z" fill="#707070"/></svg>
<svg style="left:21.5px;top:43.499999999999986px;" width="9" height="8" viewBox="0 0 9 8"><path d="M0.3 0.5H3.4L4.4 1.6H8.7V7.7H0.3Z" fill="#c4c4c4"/></svg>
<span class="t" style="left:32px;top:43.92px;font-size:8.6px;line-height:8.6px;color:#c4c4c4;font-weight:400;">Galaxia Spr</span>
<svg style="left:21.5px;top:54.09999999999995px;" width="9" height="8" viewBox="0 0 9 8"><path d="M0.3 0.5H3.4L4.4 1.6H8.7V7.7H0.3Z" fill="#c4c4c4"/></svg>
<span class="t" style="left:32px;top:54.52px;font-size:8.6px;line-height:8.6px;color:#c4c4c4;font-weight:400;">Materials</span>
<svg style="left:13px;top:65.59999999999998px;" width="6" height="7" viewBox="0 0 6 7"><path d="M0.3 0.3L5.3 3.5L0.3 6.7Z" fill="#707070"/></svg>
<svg style="left:21.5px;top:64.69999999999997px;" width="9" height="8" viewBox="0 0 9 8"><path d="M0.3 0.5H3.4L4.4 1.6H8.7V7.7H0.3Z" fill="#c4c4c4"/></svg>
<span class="t" style="left:32px;top:65.12px;font-size:8.6px;line-height:8.6px;color:#c4c4c4;font-weight:400;">Presets</span>
<svg style="left:21.5px;top:75.3px;" width="9" height="8" viewBox="0 0 9 8"><path d="M0.3 0.5H3.4L4.4 1.6H8.7V7.7H0.3Z" fill="#c4c4c4"/></svg>
<span class="t" style="left:32px;top:75.72px;font-size:8.6px;line-height:8.6px;color:#c4c4c4;font-weight:400;">Scenes</span>
<svg style="left:21.5px;top:85.89999999999996px;" width="9" height="8" viewBox="0 0 9 8"><path d="M0.3 0.5H3.4L4.4 1.6H8.7V7.7H0.3Z" fill="#c4c4c4"/></svg>
<span class="t" style="left:32px;top:86.32px;font-size:8.6px;line-height:8.6px;color:#c4c4c4;font-weight:400;">Scripts</span>
<svg style="left:21.5px;top:96.49999999999999px;" width="9" height="8" viewBox="0 0 9 8"><path d="M0.3 0.5H3.4L4.4 1.6H8.7V7.7H0.3Z" fill="#c4c4c4"/></svg>
<span class="t" style="left:32px;top:96.92px;font-size:8.6px;line-height:8.6px;color:#c4c4c4;font-weight:400;">Settings</span>
<svg style="left:13px;top:107.99999999999996px;" width="6" height="7" viewBox="0 0 6 7"><path d="M0.3 0.3L5.3 3.5L0.3 6.7Z" fill="#707070"/></svg>
<svg style="left:21.5px;top:107.09999999999995px;" width="9" height="8" viewBox="0 0 9 8"><path d="M0.3 0.5H3.4L4.4 1.6H8.7V7.7H0.3Z" fill="#c4c4c4"/></svg>
<span class="t" style="left:32px;top:107.52px;font-size:8.6px;line-height:8.6px;color:#c4c4c4;font-weight:400;">SimplePixel</span>
<svg style="left:13px;top:118.59999999999998px;" width="6" height="7" viewBox="0 0 6 7"><path d="M0.3 0.3L5.3 3.5L0.3 6.7Z" fill="#707070"/></svg>
<svg style="left:21.5px;top:117.69999999999997px;" width="9" height="8" viewBox="0 0 9 8"><path d="M0.3 0.5H3.4L4.4 1.6H8.7V7.7H0.3Z" fill="#c4c4c4"/></svg>
<span class="t" style="left:32px;top:118.12px;font-size:8.6px;line-height:8.6px;color:#c4c4c4;font-weight:400;">TutorialInfo</span>
<svg style="left:12.7px;top:130.3px;" width="7" height="6" viewBox="0 0 7 6"><path d="M0.3 0.3H6.7L3.5 5.3Z" fill="#707070"/></svg>
<svg style="left:21.5px;top:128.3px;" width="10" height="8" viewBox="0 0 10 8"><path d="M0.3 0.5H3.4L4.4 1.6H8V3H2.5L0.3 7.7Z" fill="#c4c4c4"/><path d="M2.6 3.6H9.8L7.6 7.7H0.5Z" fill="#c4c4c4"/></svg>
<span class="t" style="left:32px;top:128.72px;font-size:8.6px;line-height:8.6px;color:#c4c4c4;font-weight:400;">Vertical 2D</span>
<svg style="left:30.5px;top:138.89999999999998px;" width="9" height="8" viewBox="0 0 9 8"><path d="M0.3 0.5H3.4L4.4 1.6H8.7V7.7H0.3Z" fill="#c4c4c4"/></svg>
<span class="t" style="left:41.5px;top:139.32px;font-size:8.6px;line-height:8.6px;color:#c4c4c4;font-weight:400;">Demo</span>
<svg style="left:23.2px;top:151.49999999999994px;" width="7" height="6" viewBox="0 0 7 6"><path d="M0.3 0.3H6.7L3.5 5.3Z" fill="#707070"/></svg>
<svg style="left:30.5px;top:149.49999999999994px;" width="10" height="8" viewBox="0 0 10 8"><path d="M0.3 0.5H3.4L4.4 1.6H8V3H2.5L0.3 7.7Z" fill="#c4c4c4"/><path d="M2.6 3.6H9.8L7.6 7.7H0.5Z" fill="#c4c4c4"/></svg>
<span class="t" style="left:41.5px;top:149.92px;font-size:8.6px;line-height:8.6px;color:#c4c4c4;font-weight:400;">ReadMe</span>
<svg style="left:32.7px;top:162.09999999999997px;" width="7" height="6" viewBox="0 0 7 6"><path d="M0.3 0.3H6.7L3.5 5.3Z" fill="#707070"/></svg>
<svg style="left:40px;top:160.09999999999997px;" width="10" height="8" viewBox="0 0 10 8"><path d="M0.3 0.5H3.4L4.4 1.6H8V3H2.5L0.3 7.7Z" fill="#c4c4c4"/><path d="M2.6 3.6H9.8L7.6 7.7H0.5Z" fill="#c4c4c4"/></svg>
<span class="t" style="left:50.5px;top:160.52px;font-size:8.6px;line-height:8.6px;color:#c4c4c4;font-weight:400;">Scripts</span>
<svg style="left:49px;top:170.7px;" width="9" height="8" viewBox="0 0 9 8"><path d="M0.3 0.5H3.4L4.4 1.6H8.7V7.7H0.3Z" fill="#c4c4c4"/></svg>
<span class="t" style="left:59.5px;top:171.12px;font-size:8.6px;line-height:8.6px;color:#c4c4c4;font-weight:400;">Editor</span>
<svg style="left:30.5px;top:181.3px;" width="9" height="8" viewBox="0 0 9 8"><path d="M0.3 0.5H3.4L4.4 1.6H8.7V7.7H0.3Z" fill="#c4c4c4"/></svg>
<span class="t" style="left:41.5px;top:181.72px;font-size:8.6px;line-height:8.6px;color:#c4c4c4;font-weight:400;">Sprites</span>
<svg style="left:4px;top:192.79999999999995px;" width="6" height="7" viewBox="0 0 6 7"><path d="M0.3 0.3L5.3 3.5L0.3 6.7Z" fill="#707070"/></svg>
<svg style="left:12px;top:191.89999999999998px;" width="9" height="8" viewBox="0 0 9 8"><path d="M0.3 0.5H3.4L4.4 1.6H8.7V7.7H0.3Z" fill="#c4c4c4"/></svg>
<span class="t" style="left:24px;top:192.49px;font-size:8.4px;line-height:8.4px;color:#d2d2d2;font-weight:700;">Packages</span>
</div>
<div style="left:590.8px;top:289.5px;width:154px;height:13.4px;background:#3a3a3a;"></div>
<span class="t" style="left:593px;top:292.72px;font-size:8.6px;line-height:8.6px;color:#a8a8a8;font-weight:400;">Assets</span>
<svg style="left:623px;top:294px;" width="4" height="7" viewBox="0 0 4 7"><path d="M0.5 0.5L3.3 3.5L0.5 6.5" fill="none" stroke="#a8a8a8" stroke-width="0.9"/></svg>
<span class="t" style="left:631px;top:292.89px;font-size:8.4px;line-height:8.4px;color:#d2d2d2;font-weight:700;">Presets</span>
<svg style="left:615.6px;top:317.7px;" width="33" height="28" viewBox="0 0 33 28"><path d="M2 0H12L15 5H31A2 2 0 0 1 33 7V26A2 2 0 0 1 31 28H2A2 2 0 0 1 0 26V2A2 2 0 0 1 2 0Z" fill="#c2c2c2"/></svg>
<svg style="left:683.5px;top:312.5px;" width="37.5" height="37.5" viewBox="0 0 37.5 37.5"><rect width="37.5" height="37.5" fill="#7a7a7a"/><rect x="7" y="9.5" width="24" height="2" rx="1" fill="#3e3e3e"/><rect x="7" y="9.5" width="16" height="2" rx="1" fill="#e8e8e8"/><rect x="22" y="8.0" width="2" height="5" rx="0.6" fill="#6aa8f0"/><rect x="7" y="18.5" width="24" height="2" rx="1" fill="#3e3e3e"/><rect x="7" y="18.5" width="3" height="2" rx="1" fill="#e8e8e8"/><rect x="9" y="17.0" width="2" height="5" rx="0.6" fill="#6aa8f0"/><rect x="7" y="28" width="24" height="2" rx="1" fill="#3e3e3e"/><rect x="7" y="28" width="11" height="2" rx="1" fill="#e8e8e8"/><rect x="17" y="26.5" width="2" height="5" rx="0.6" fill="#6aa8f0"/></svg>
<svg style="left:613px;top:374px;" width="38" height="38" viewBox="0 0 38 38"><rect width="38" height="38" fill="#7a7a7a"/><rect x="7" y="9.5" width="24" height="2" rx="1" fill="#3e3e3e"/><rect x="7" y="9.5" width="16" height="2" rx="1" fill="#e8e8e8"/><rect x="22" y="8.0" width="2" height="5" rx="0.6" fill="#6aa8f0"/><rect x="7" y="18.5" width="24" height="2" rx="1" fill="#3e3e3e"/><rect x="7" y="18.5" width="3" height="2" rx="1" fill="#e8e8e8"/><rect x="9" y="17.0" width="2" height="5" rx="0.6" fill="#6aa8f0"/><rect x="7" y="28" width="24" height="2" rx="1" fill="#3e3e3e"/><rect x="7" y="28" width="11" height="2" rx="1" fill="#e8e8e8"/><rect x="17" y="26.5" width="2" height="5" rx="0.6" fill="#6aa8f0"/></svg>
<svg style="left:680px;top:372px" width="44" height="44" viewBox="0 0 549 549"><defs><linearGradient id="cry" x1="0" y1="0" x2="0" y2="1"><stop offset="0" stop-color="#f07ab8"/><stop offset="0.5" stop-color="#f060a8"/><stop offset="1" stop-color="#d82a80"/></linearGradient></defs><rect x="30" y="25" width="505" height="495" fill="#0a090a"/><path d="M250 90L305 80V125L335 120V330L310 400L280 440L250 450L225 400L220 330V165L250 150Z" fill="url(#cry)"/><path d="M255 195L305 180V290L265 300Z" fill="#ffffff"/><path d="M240 165L255 195L265 300L235 310Z" fill="#f8b0d8"/></svg>
<svg style="left:613px;top:436.2px;" width="37.5" height="37.5" viewBox="0 0 37.5 37.5"><rect width="37.5" height="37.5" fill="#7a7a7a"/><rect x="7" y="9.5" width="24" height="2" rx="1" fill="#3e3e3e"/><rect x="7" y="9.5" width="16" height="2" rx="1" fill="#e8e8e8"/><rect x="22" y="8.0" width="2" height="5" rx="0.6" fill="#6aa8f0"/><rect x="7" y="18.5" width="24" height="2" rx="1" fill="#3e3e3e"/><rect x="7" y="18.5" width="3" height="2" rx="1" fill="#e8e8e8"/><rect x="9" y="17.0" width="2" height="5" rx="0.6" fill="#6aa8f0"/><rect x="7" y="28" width="24" height="2" rx="1" fill="#3e3e3e"/><rect x="7" y="28" width="11" height="2" rx="1" fill="#e8e8e8"/><rect x="17" y="26.5" width="2" height="5" rx="0.6" fill="#6aa8f0"/></svg>
<svg style="left:683.9px;top:436.2px;" width="37" height="37" viewBox="0 0 37 37"><rect width="37" height="37" fill="#7a7a7a"/><rect x="7" y="9.5" width="24" height="2" rx="1" fill="#3e3e3e"/><rect x="7" y="9.5" width="16" height="2" rx="1" fill="#e8e8e8"/><rect x="22" y="8.0" width="2" height="5" rx="0.6" fill="#6aa8f0"/><rect x="7" y="18.5" width="24" height="2" rx="1" fill="#3e3e3e"/><rect x="7" y="18.5" width="3" height="2" rx="1" fill="#e8e8e8"/><rect x="9" y="17.0" width="2" height="5" rx="0.6" fill="#6aa8f0"/><rect x="7" y="28" width="24" height="2" rx="1" fill="#3e3e3e"/><rect x="7" y="28" width="11" height="2" rx="1" fill="#e8e8e8"/><rect x="17" y="26.5" width="2" height="5" rx="0.6" fill="#6aa8f0"/></svg>
<span class="t" style="left:632px;top:355.07px;font-size:7.6px;line-height:7.6px;color:#c4c4c4;font-weight:400;transform:translateX(-50%)">Defaults</span>
<span class="t" style="left:702.5px;top:355.07px;font-size:7.6px;line-height:7.6px;color:#c4c4c4;font-weight:400;transform:translateX(-50%)">AudioCom...</span>
<span class="t" style="left:632px;top:417.37px;font-size:7.6px;line-height:7.6px;color:#c4c4c4;font-weight:400;transform:translateX(-50%)">AudioStre...</span>
<span class="t" style="left:702.5px;top:417.37px;font-size:7.6px;line-height:7.6px;color:#c4c4c4;font-weight:400;transform:translateX(-50%)">Bullet</span>
<span class="t" style="left:632px;top:480.07px;font-size:7.6px;line-height:7.6px;color:#c4c4c4;font-weight:400;transform:translateX(-50%)">NormalTex...</span>
<span class="t" style="left:702.5px;top:480.07px;font-size:7.6px;line-height:7.6px;color:#c4c4c4;font-weight:400;transform:translateX(-50%)">UtilityTextu...</span>
<div style="left:590.8px;top:521.7px;width:154px;height:12.8px;background:#3a3a3a;"></div>
<div style="left:697px;top:527px;width:36.5px;height:1px;background:#6a6a6a;"></div>
<svg style="left:714.5px;top:524px;" width="7" height="7" viewBox="0 0 7 7"><circle cx="3.5" cy="3.5" r="3.2" fill="#a8a8a8"/></svg>
<div style="left:744.5px;top:48.5px;width:1.5px;height:486px;background:#191919;"></div>
<div style="left:746px;top:48.5px;width:278px;height:13.2px;background:#262626;"></div>
<div style="left:746px;top:49px;width:63.6px;height:12.7px;background:#3c3c3c;border-radius:2px 2px 0 0"></div>
<div style="left:746px;top:49px;width:63.6px;height:1.5px;background:#3a79bb;"></div>
<svg style="left:752px;top:52.5px;" width="8" height="8" viewBox="0 0 8 8"><circle cx="4" cy="4" r="3.8" fill="#c4c4c4"/><rect x="3.4" y="3.3" width="1.3" height="3.2" fill="#3c3c3c"/><rect x="3.4" y="1.6" width="1.3" height="1.1" fill="#3c3c3c"/></svg>
<span class="t" style="left:762px;top:52.40px;font-size:8.5px;line-height:8.5px;color:#c4c4c4;font-weight:400;">Inspector</span>
<svg style="left:1000.5px;top:51.5px;" width="7" height="7" viewBox="0 0 7 7"><path d="M1.5 2.2A2 2 0 0 1 5.5 2.2V3.6" fill="none" stroke="#bdbdbd" stroke-width="0.9"/><path d="M0.5 3.6H6.5V6.5H0.5Z" fill="none" stroke="#bdbdbd" stroke-width="0.9"/></svg>
<svg style="left:1015px;top:51.5px;" width="3" height="9" viewBox="0 0 3 9"><rect x="0.7" y="1" width="1.1" height="1.4" fill="#c4c4c4"/><rect x="0.7" y="3.6" width="1.1" height="1.4" fill="#c4c4c4"/><rect x="0.7" y="6.2" width="1.1" height="1.4" fill="#c4c4c4"/></svg>
<div style="left:746px;top:61.7px;width:278px;height:39.5px;background:#3e3e3e;"></div>
<div style="left:746px;top:101.2px;width:278px;height:1px;background:#2a2a2a;"></div>
<div style="left:746px;top:102.2px;width:278px;height:432.3px;background:#3a3a3a;"></div>
<svg style="left:751px;top:67.5px;" width="14" height="15" viewBox="0 0 14 15"><path d="M7 0.8L13.2 3.6V11.2L7 14.2L0.8 11.2V3.6Z M0.8 3.6L7 6.6L13.2 3.6 M7 6.6V14.2" fill="none" stroke="#c8c8c8" stroke-width="1"/></svg>
<svg style="left:763.5px;top:83px;" width="6" height="4" viewBox="0 0 6 4"><path d="M0 0H6L3 3.6Z" fill="#c4c4c4"/></svg>
<div style="left:776.5px;top:68.5px;width:9px;height:10px;background:#2a2a2a;border-radius:1.5px"></div>
<svg style="left:778.0px;top:71.0px;" width="6" height="5" viewBox="0 0 6 5"><path d="M0.5 2.5L2.3 4.3L5.6 0.8" fill="none" stroke="#e8e8e8" stroke-width="1.1"/></svg>
<div style="left:790px;top:68px;width:186.6px;height:11.4px;background:#2a2a2a;border-radius:2px"></div>
<span class="t" style="left:792px;top:70.72px;font-size:8.6px;line-height:8.6px;color:#d8d8d8;font-weight:700;">Player</span>
<div style="left:979.5px;top:69px;width:8.5px;height:10px;background:#2a2a2a;border-radius:1.5px"></div>
<span class="t" style="left:991.5px;top:70.22px;font-size:8.6px;line-height:8.6px;color:#c4c4c4;font-weight:400;">Static</span>
<svg style="left:1014.5px;top:72.5px;" width="6" height="4" viewBox="0 0 6 4"><path d="M0 0H6L3 3.6Z" fill="#c4c4c4"/></svg>
<span class="t" style="left:774px;top:85.82px;font-size:8.6px;line-height:8.6px;color:#bdbdbd;font-weight:400;">Tag</span>
<div style="left:792px;top:84px;width:101px;height:11px;background:#4c4c4c;border-radius:2px"></div>
<span class="t" style="left:794px;top:85.82px;font-size:8.6px;line-height:8.6px;color:#c8c8c8;font-weight:400;">Untagged</span>
<svg style="left:884px;top:88.5px;" width="6" height="4" viewBox="0 0 6 4"><path d="M0 0H6L3 3.6Z" fill="#c4c4c4"/></svg>
<span class="t" style="left:903px;top:85.82px;font-size:8.6px;line-height:8.6px;color:#bdbdbd;font-weight:400;">Layer</span>
<div style="left:928px;top:84px;width:93px;height:11px;background:#4c4c4c;border-radius:2px"></div>
<span class="t" style="left:930px;top:85.82px;font-size:8.6px;line-height:8.6px;color:#c8c8c8;font-weight:400;">Default</span>
<svg style="left:1012px;top:88.5px;" width="6" height="4" viewBox="0 0 6 4"><path d="M0 0H6L3 3.6Z" fill="#c4c4c4"/></svg>
<div style="left:746px;top:102.2px;width:278px;height:13.5px;background:#3e3e3e;"></div>
<div style="left:746px;top:115.7px;width:278px;height:0.8px;background:#2a2a2a;"></div>
<svg style="left:749.5px;top:105.75px;" width="7" height="6" viewBox="0 0 7 6"><path d="M0.3 0.3H6.7L3.5 5.5Z" fill="#7a7a7a"/></svg>

<span class="t" style="left:786.3px;top:104.94px;font-size:8.4px;line-height:8.4px;color:#d2d2d2;font-weight:700;">Transform</span>
<svg style="left:986px;top:104.55px;" width="8" height="8" viewBox="0 0 8 8"><circle cx="4" cy="4" r="3.6" fill="#c8c8c8"/><path d="M2.8 3.2A1.2 1.2 0 1 1 4.4 4.3L4 4.8V5.4" fill="none" stroke="#3c3c3c" stroke-width="0.9"/><circle cx="4" cy="6.5" r="0.5" fill="#3c3c3c"/></svg>
<svg style="left:999px;top:104.55px;" width="8" height="8" viewBox="0 0 8 8"><path d="M0.5 2.5H7.5M0.5 5.5H7.5" stroke="#c8c8c8" stroke-width="0.9"/><rect x="4.2" y="0.8" width="1.8" height="3.4" fill="#c8c8c8"/><rect x="1.8" y="3.8" width="1.8" height="3.4" fill="#c8c8c8"/></svg>
<svg style="left:1015px;top:104.05px;" width="3" height="9" viewBox="0 0 3 9"><rect x="0.7" y="1" width="1.1" height="1.4" fill="#c4c4c4"/><rect x="0.7" y="3.6" width="1.1" height="1.4" fill="#c4c4c4"/><rect x="0.7" y="6.2" width="1.1" height="1.4" fill="#c4c4c4"/></svg>
<svg style="left:760px;top:104px;" width="11" height="11" viewBox="0 0 11 11"><path d="M5.5 5.5V1" stroke="#8fd14f" stroke-width="1.6"/><path d="M5.5 5.5L1.5 8.5" stroke="#4fb8f0" stroke-width="1.6"/><path d="M5.5 5.5L9.5 8.5" stroke="#f0603a" stroke-width="1.6"/></svg>
<span class="t" style="left:759px;top:120.72px;font-size:8.6px;line-height:8.6px;color:#c4c4c4;font-weight:400;">Position</span>
<span class="t" style="left:858.7px;top:120.72px;font-size:8.6px;line-height:8.6px;color:#bdbdbd;font-weight:400;">X</span>
<div style="left:866.2px;top:118.2px;width:44.7px;height:11.8px;background:#2a2a2a;border-radius:2px"></div>
<span class="t" style="left:869.2px;top:120.72px;font-size:8.6px;line-height:8.6px;color:#c8c8c8;font-weight:400;">2.89977</span>
<span class="t" style="left:913.9px;top:120.72px;font-size:8.6px;line-height:8.6px;color:#bdbdbd;font-weight:400;">Y</span>
<div style="left:921.4px;top:118.2px;width:44.4px;height:11.8px;background:#2a2a2a;border-radius:2px"></div>
<span class="t" style="left:924.4px;top:120.72px;font-size:8.6px;line-height:8.6px;color:#c8c8c8;font-weight:400;">3.388466</span>
<span class="t" style="left:969.5px;top:120.72px;font-size:8.6px;line-height:8.6px;color:#bdbdbd;font-weight:400;">Z</span>
<div style="left:977px;top:118.2px;width:44.5px;height:11.8px;background:#2a2a2a;border-radius:2px"></div>
<span class="t" style="left:980px;top:120.72px;font-size:8.6px;line-height:8.6px;color:#c8c8c8;font-weight:400;">0</span>
<span class="t" style="left:759px;top:134.02px;font-size:8.6px;line-height:8.6px;color:#c4c4c4;font-weight:400;">Rotation</span>
<span class="t" style="left:858.7px;top:134.02px;font-size:8.6px;line-height:8.6px;color:#bdbdbd;font-weight:400;">X</span>
<div style="left:866.2px;top:131.5px;width:44.7px;height:11.8px;background:#2a2a2a;border-radius:2px"></div>
<span class="t" style="left:869.2px;top:134.02px;font-size:8.6px;line-height:8.6px;color:#c8c8c8;font-weight:400;">0</span>
<span class="t" style="left:913.9px;top:134.02px;font-size:8.6px;line-height:8.6px;color:#bdbdbd;font-weight:400;">Y</span>
<div style="left:921.4px;top:131.5px;width:44.4px;height:11.8px;background:#2a2a2a;border-radius:2px"></div>
<span class="t" style="left:924.4px;top:134.02px;font-size:8.6px;line-height:8.6px;color:#c8c8c8;font-weight:400;">0</span>
<span class="t" style="left:969.5px;top:134.02px;font-size:8.6px;line-height:8.6px;color:#bdbdbd;font-weight:400;">Z</span>
<div style="left:977px;top:131.5px;width:44.5px;height:11.8px;background:#2a2a2a;border-radius:2px"></div>
<span class="t" style="left:980px;top:134.02px;font-size:8.6px;line-height:8.6px;color:#c8c8c8;font-weight:400;">0</span>
<span class="t" style="left:759px;top:147.32px;font-size:8.6px;line-height:8.6px;color:#c4c4c4;font-weight:400;">Scale</span>
<span class="t" style="left:858.7px;top:147.32px;font-size:8.6px;line-height:8.6px;color:#bdbdbd;font-weight:400;">X</span>
<div style="left:866.2px;top:144.8px;width:44.7px;height:11.8px;background:#2a2a2a;border-radius:2px"></div>
<span class="t" style="left:869.2px;top:147.32px;font-size:8.6px;line-height:8.6px;color:#c8c8c8;font-weight:400;">1</span>
<span class="t" style="left:913.9px;top:147.32px;font-size:8.6px;line-height:8.6px;color:#bdbdbd;font-weight:400;">Y</span>
<div style="left:921.4px;top:144.8px;width:44.4px;height:11.8px;background:#2a2a2a;border-radius:2px"></div>
<span class="t" style="left:924.4px;top:147.32px;font-size:8.6px;line-height:8.6px;color:#c8c8c8;font-weight:400;">1</span>
<span class="t" style="left:969.5px;top:147.32px;font-size:8.6px;line-height:8.6px;color:#bdbdbd;font-weight:400;">Z</span>
<div style="left:977px;top:144.8px;width:44.5px;height:11.8px;background:#2a2a2a;border-radius:2px"></div>
<span class="t" style="left:980px;top:147.32px;font-size:8.6px;line-height:8.6px;color:#c8c8c8;font-weight:400;">1</span>
<div style="left:746px;top:163.2px;width:278px;height:0.8px;background:#2a2a2a;"></div>
<div style="left:746px;top:164px;width:278px;height:14.1px;background:#3e3e3e;"></div>
<div style="left:746px;top:178.1px;width:278px;height:0.8px;background:#2a2a2a;"></div>
<svg style="left:750.5px;top:166.85px;" width="6" height="7" viewBox="0 0 6 7"><path d="M0.3 0.3L5.5 3.5L0.3 6.7Z" fill="#7a7a7a"/></svg>

<div style="left:773.2px;top:165.65px;width:9px;height:10px;background:#2a2a2a;border-radius:1.5px"></div>
<svg style="left:774.7px;top:168.15px;" width="6" height="5" viewBox="0 0 6 5"><path d="M0.5 2.5L2.3 4.3L5.6 0.8" fill="none" stroke="#e8e8e8" stroke-width="1.1"/></svg>
<span class="t" style="left:786.3px;top:167.04px;font-size:8.4px;line-height:8.4px;color:#d2d2d2;font-weight:700;">Sprite Renderer</span>
<svg style="left:986px;top:166.65px;" width="8" height="8" viewBox="0 0 8 8"><circle cx="4" cy="4" r="3.6" fill="#c8c8c8"/><path d="M2.8 3.2A1.2 1.2 0 1 1 4.4 4.3L4 4.8V5.4" fill="none" stroke="#3c3c3c" stroke-width="0.9"/><circle cx="4" cy="6.5" r="0.5" fill="#3c3c3c"/></svg>
<svg style="left:999px;top:166.65px;" width="8" height="8" viewBox="0 0 8 8"><path d="M0.5 2.5H7.5M0.5 5.5H7.5" stroke="#c8c8c8" stroke-width="0.9"/><rect x="4.2" y="0.8" width="1.8" height="3.4" fill="#c8c8c8"/><rect x="1.8" y="3.8" width="1.8" height="3.4" fill="#c8c8c8"/></svg>
<svg style="left:1015px;top:166.15px;" width="3" height="9" viewBox="0 0 3 9"><rect x="0.7" y="1" width="1.1" height="1.4" fill="#c4c4c4"/><rect x="0.7" y="3.6" width="1.1" height="1.4" fill="#c4c4c4"/><rect x="0.7" y="6.2" width="1.1" height="1.4" fill="#c4c4c4"/></svg>
<svg style="left:759.5px;top:166px;" width="11" height="11" viewBox="0 0 11 11"><rect x="0.8" y="0.8" width="9.4" height="9.4" fill="none" stroke="#8a6ad0" stroke-width="0.6"/><circle cx="0.8" cy="0.8" r="1" fill="#9a72e0"/><circle cx="10.2" cy="0.8" r="1" fill="#9a72e0"/><circle cx="0.8" cy="10.2" r="1" fill="#9a72e0"/><circle cx="10.2" cy="10.2" r="1" fill="#9a72e0"/><ellipse cx="5.8" cy="7.4" rx="2.8" ry="2.2" fill="none" stroke="#bdbdbd" stroke-width="1.2"/><circle cx="5.2" cy="4" r="1.5" fill="#bdbdbd"/></svg>
<div style="left:746px;top:178.9px;width:278px;height:14.1px;background:#3e3e3e;"></div>
<div style="left:746px;top:193.0px;width:278px;height:0.8px;background:#2a2a2a;"></div>
<svg style="left:750.5px;top:181.75px;" width="6" height="7" viewBox="0 0 6 7"><path d="M0.3 0.3L5.5 3.5L0.3 6.7Z" fill="#7a7a7a"/></svg>

<div style="left:773.2px;top:180.55px;width:9px;height:10px;background:#2a2a2a;border-radius:1.5px"></div>
<svg style="left:774.7px;top:183.05px;" width="6" height="5" viewBox="0 0 6 5"><path d="M0.5 2.5L2.3 4.3L5.6 0.8" fill="none" stroke="#e8e8e8" stroke-width="1.1"/></svg>
<span class="t" style="left:786.3px;top:181.94px;font-size:8.4px;line-height:8.4px;color:#d2d2d2;font-weight:700;">Animator</span>
<svg style="left:986px;top:181.55px;" width="8" height="8" viewBox="0 0 8 8"><circle cx="4" cy="4" r="3.6" fill="#c8c8c8"/><path d="M2.8 3.2A1.2 1.2 0 1 1 4.4 4.3L4 4.8V5.4" fill="none" stroke="#3c3c3c" stroke-width="0.9"/><circle cx="4" cy="6.5" r="0.5" fill="#3c3c3c"/></svg>
<svg style="left:999px;top:181.55px;" width="8" height="8" viewBox="0 0 8 8"><path d="M0.5 2.5H7.5M0.5 5.5H7.5" stroke="#c8c8c8" stroke-width="0.9"/><rect x="4.2" y="0.8" width="1.8" height="3.4" fill="#c8c8c8"/><rect x="1.8" y="3.8" width="1.8" height="3.4" fill="#c8c8c8"/></svg>
<svg style="left:1015px;top:181.05px;" width="3" height="9" viewBox="0 0 3 9"><rect x="0.7" y="1" width="1.1" height="1.4" fill="#c4c4c4"/><rect x="0.7" y="3.6" width="1.1" height="1.4" fill="#c4c4c4"/><rect x="0.7" y="6.2" width="1.1" height="1.4" fill="#c4c4c4"/></svg>
<svg style="left:760px;top:181px;" width="11" height="10" viewBox="0 0 11 10"><path d="M0.5 1L4.5 4.5H10M8 2.5L10 4.5L8 6.5" fill="none" stroke="#c8c8c8" stroke-width="1"/><path d="M4.5 4.5L1.5 9" stroke="#4ac8c0" stroke-width="1.2"/></svg>
<div style="left:746px;top:193.8px;width:278px;height:14.1px;background:#3e3e3e;"></div>
<div style="left:746px;top:207.9px;width:278px;height:0.8px;background:#2a2a2a;"></div>
<svg style="left:750.5px;top:196.65px;" width="6" height="7" viewBox="0 0 6 7"><path d="M0.3 0.3L5.5 3.5L0.3 6.7Z" fill="#7a7a7a"/></svg>

<span class="t" style="left:786.3px;top:196.84px;font-size:8.4px;line-height:8.4px;color:#d2d2d2;font-weight:700;">Rigidbody 2D</span>
<svg style="left:986px;top:196.45000000000002px;" width="8" height="8" viewBox="0 0 8 8"><circle cx="4" cy="4" r="3.6" fill="#c8c8c8"/><path d="M2.8 3.2A1.2 1.2 0 1 1 4.4 4.3L4 4.8V5.4" fill="none" stroke="#3c3c3c" stroke-width="0.9"/><circle cx="4" cy="6.5" r="0.5" fill="#3c3c3c"/></svg>
<svg style="left:999px;top:196.45000000000002px;" width="8" height="8" viewBox="0 0 8 8"><path d="M0.5 2.5H7.5M0.5 5.5H7.5" stroke="#c8c8c8" stroke-width="0.9"/><rect x="4.2" y="0.8" width="1.8" height="3.4" fill="#c8c8c8"/><rect x="1.8" y="3.8" width="1.8" height="3.4" fill="#c8c8c8"/></svg>
<svg style="left:1015px;top:195.95000000000002px;" width="3" height="9" viewBox="0 0 3 9"><rect x="0.7" y="1" width="1.1" height="1.4" fill="#c4c4c4"/><rect x="0.7" y="3.6" width="1.1" height="1.4" fill="#c4c4c4"/><rect x="0.7" y="6.2" width="1.1" height="1.4" fill="#c4c4c4"/></svg>
<svg style="left:759.5px;top:195.3px;" width="11" height="11" viewBox="0 0 11 11"><circle cx="5.5" cy="5.5" r="5" fill="#8cd84a"/><path d="M5.5 1.2V5.5H1.2A4.3 4.3 0 0 1 5.5 1.2Z M5.5 9.8V5.5H9.8A4.3 4.3 0 0 1 5.5 9.8Z" fill="#1e1e1e"/></svg>
<div style="left:746px;top:208.7px;width:278px;height:14.1px;background:#3e3e3e;"></div>
<div style="left:746px;top:222.79999999999998px;width:278px;height:0.8px;background:#2a2a2a;"></div>
<svg style="left:750.5px;top:211.54999999999998px;" width="6" height="7" viewBox="0 0 6 7"><path d="M0.3 0.3L5.5 3.5L0.3 6.7Z" fill="#7a7a7a"/></svg>

<div style="left:773.2px;top:210.35px;width:9px;height:10px;background:#2a2a2a;border-radius:1.5px"></div>
<svg style="left:774.7px;top:212.85px;" width="6" height="5" viewBox="0 0 6 5"><path d="M0.5 2.5L2.3 4.3L5.6 0.8" fill="none" stroke="#e8e8e8" stroke-width="1.1"/></svg>
<span class="t" style="left:786.3px;top:211.74px;font-size:8.4px;line-height:8.4px;color:#7aa8ea;font-weight:700;">Capsule Collider 2D</span>
<svg style="left:986px;top:211.35px;" width="8" height="8" viewBox="0 0 8 8"><circle cx="4" cy="4" r="3.6" fill="#c8c8c8"/><path d="M2.8 3.2A1.2 1.2 0 1 1 4.4 4.3L4 4.8V5.4" fill="none" stroke="#3c3c3c" stroke-width="0.9"/><circle cx="4" cy="6.5" r="0.5" fill="#3c3c3c"/></svg>
<svg style="left:999px;top:211.35px;" width="8" height="8" viewBox="0 0 8 8"><path d="M0.5 2.5H7.5M0.5 5.5H7.5" stroke="#c8c8c8" stroke-width="0.9"/><rect x="4.2" y="0.8" width="1.8" height="3.4" fill="#c8c8c8"/><rect x="1.8" y="3.8" width="1.8" height="3.4" fill="#c8c8c8"/></svg>
<svg style="left:1015px;top:210.85px;" width="3" height="9" viewBox="0 0 3 9"><rect x="0.7" y="1" width="1.1" height="1.4" fill="#c4c4c4"/><rect x="0.7" y="3.6" width="1.1" height="1.4" fill="#c4c4c4"/><rect x="0.7" y="6.2" width="1.1" height="1.4" fill="#c4c4c4"/></svg>
<svg style="left:760.5px;top:210.8px;" width="8" height="10" viewBox="0 0 8 10"><rect x="1.2" y="1" width="5.2" height="8" rx="2.6" fill="none" stroke="#8cd84a" stroke-width="1.9"/></svg>
<div style="left:746px;top:223.6px;width:278px;height:14.1px;background:#3e3e3e;"></div>
<div style="left:746px;top:237.7px;width:278px;height:0.8px;background:#2a2a2a;"></div>
<svg style="left:749.5px;top:227.45px;" width="7" height="6" viewBox="0 0 7 6"><path d="M0.3 0.3H6.7L3.5 5.5Z" fill="#7a7a7a"/></svg>

<div style="left:773.2px;top:225.25px;width:9px;height:10px;background:#2a2a2a;border-radius:1.5px"></div>
<svg style="left:774.7px;top:227.75px;" width="6" height="5" viewBox="0 0 6 5"><path d="M0.5 2.5L2.3 4.3L5.6 0.8" fill="none" stroke="#e8e8e8" stroke-width="1.1"/></svg>
<span class="t" style="left:786.3px;top:226.64px;font-size:8.4px;line-height:8.4px;color:#d2d2d2;font-weight:700;">Player Control (Script)</span>
<svg style="left:986px;top:226.25px;" width="8" height="8" viewBox="0 0 8 8"><circle cx="4" cy="4" r="3.6" fill="#c8c8c8"/><path d="M2.8 3.2A1.2 1.2 0 1 1 4.4 4.3L4 4.8V5.4" fill="none" stroke="#3c3c3c" stroke-width="0.9"/><circle cx="4" cy="6.5" r="0.5" fill="#3c3c3c"/></svg>
<svg style="left:999px;top:226.25px;" width="8" height="8" viewBox="0 0 8 8"><path d="M0.5 2.5H7.5M0.5 5.5H7.5" stroke="#c8c8c8" stroke-width="0.9"/><rect x="4.2" y="0.8" width="1.8" height="3.4" fill="#c8c8c8"/><rect x="1.8" y="3.8" width="1.8" height="3.4" fill="#c8c8c8"/></svg>
<svg style="left:1015px;top:225.75px;" width="3" height="9" viewBox="0 0 3 9"><rect x="0.7" y="1" width="1.1" height="1.4" fill="#c4c4c4"/><rect x="0.7" y="3.6" width="1.1" height="1.4" fill="#c4c4c4"/><rect x="0.7" y="6.2" width="1.1" height="1.4" fill="#c4c4c4"/></svg>
<svg style="left:760.5px;top:225.5px;" width="9" height="11" viewBox="0 0 9 11"><path d="M0.5 0.5H6L8.5 3V10.5H0.5Z" fill="#e8e8e8"/><path d="M3.3 3V9M5.6 3V9M2 4.8H7M2 7.2H7" stroke="#3aa060" stroke-width="0.9"/></svg>
<span class="t" style="left:759px;top:242.82px;font-size:8.6px;line-height:8.6px;color:#7e7e7e;font-weight:400;">Script</span>
<div style="left:858px;top:240.8px;width:163.4px;height:11.6px;background:#333333;border-radius:2px"></div>
<svg style="left:861px;top:243px;" width="7" height="8" viewBox="0 0 7 8"><path d="M0.5 0.5H4.5L6.5 2.5V7.5H0.5Z" fill="#7a7a7a"/></svg>
<span class="t" style="left:869.5px;top:242.52px;font-size:8.6px;line-height:8.6px;color:#7e7e7e;font-weight:400;">PlayerControl</span>
<svg style="left:1011px;top:242.5px;" width="8" height="8" viewBox="0 0 8 8"><circle cx="4" cy="4" r="3.3" fill="none" stroke="#7a7a7a" stroke-width="0.9"/><circle cx="4" cy="4" r="1.3" fill="#7a7a7a"/></svg>
<span class="t" style="left:759px;top:256.32px;font-size:8.6px;line-height:8.6px;color:#c4c4c4;font-weight:400;">Speed</span>
<div style="left:858px;top:254px;width:163.4px;height:11.6px;background:#2a2a2a;border-radius:2px"></div>
<span class="t" style="left:861px;top:256.02px;font-size:8.6px;line-height:8.6px;color:#c8c8c8;font-weight:400;">5</span>
<span class="t" style="left:759px;top:269.42px;font-size:8.6px;line-height:8.6px;color:#c4c4c4;font-weight:400;">Bullet</span>
<div style="left:858px;top:267.3px;width:163.4px;height:11.8px;background:#2a2a2a;border-radius:2px"></div>
<div style="left:1009px;top:267.3px;width:12.4px;height:11.8px;background:#333333;"></div>
<svg style="left:861px;top:269.5px;" width="8" height="8" viewBox="0 0 8 8"><path d="M4 0.5L7.5 2.2V5.8L4 7.5L0.5 5.8V2.2Z" fill="#5cc0ec"/><path d="M0.5 2.2L4 3.9L7.5 2.2M4 3.9V7.5" fill="none" stroke="#2a2a2a" stroke-width="0.6"/></svg>
<span class="t" style="left:870px;top:269.22px;font-size:8.6px;line-height:8.6px;color:#c8c8c8;font-weight:400;">Bullet</span>
<svg style="left:1011px;top:269px;" width="8" height="8" viewBox="0 0 8 8"><circle cx="4" cy="4" r="3.3" fill="none" stroke="#c4c4c4" stroke-width="0.9"/><circle cx="4" cy="4" r="1.3" fill="#c4c4c4"/></svg>
<div style="left:746px;top:283.3px;width:278px;height:1px;background:#2a2a2a;"></div>
<div style="left:746px;top:284.4px;width:278px;height:36.3px;background:#3e3e3e;"></div>
<div style="left:757px;top:289px;width:21px;height:21px;background:#080808;"></div>
<div style="left:759px;top:291px;width:17px;height:17px;background:#ffffff;"></div>
<span class="t" style="left:783px;top:289.30px;font-size:9.1px;line-height:9.1px;color:#c8c8c8;font-weight:400;">Sprites-Default (Material)</span>
<svg style="left:1005px;top:289.3px;" width="8" height="8" viewBox="0 0 8 8"><circle cx="4" cy="4" r="3.6" fill="#c8c8c8"/><path d="M2.8 3.2A1.2 1.2 0 1 1 4.4 4.3L4 4.8V5.4" fill="none" stroke="#3c3c3c" stroke-width="0.9"/><circle cx="4" cy="6.5" r="0.5" fill="#3c3c3c"/></svg>
<svg style="left:1018px;top:288.8px;" width="3" height="9" viewBox="0 0 3 9"><rect x="0.7" y="1" width="1.1" height="1.4" fill="#c4c4c4"/><rect x="0.7" y="3.6" width="1.1" height="1.4" fill="#c4c4c4"/><rect x="0.7" y="6.2" width="1.1" height="1.4" fill="#c4c4c4"/></svg>
<span class="t" style="left:781.5px;top:305.22px;font-size:8.6px;line-height:8.6px;color:#7e7e7e;font-weight:400;">Shader</span>
<div style="left:816px;top:304px;width:172.6px;height:11px;background:#474747;border-radius:2px"></div>
<span class="t" style="left:818.5px;top:305.42px;font-size:8.6px;line-height:8.6px;color:#8a8a8a;font-weight:400;">Sprites/Default</span>
<svg style="left:979px;top:308.5px;" width="6" height="4" viewBox="0 0 6 4"><path d="M0 0H6L3 3.6Z" fill="#8a8a8a"/></svg>
<div style="left:992.3px;top:304px;width:28.7px;height:11px;background:#474747;border-radius:2px"></div>
<span class="t" style="left:995px;top:305.42px;font-size:8.6px;line-height:8.6px;color:#8a8a8a;font-weight:400;">Edit...</span>
<svg style="left:750px;top:311.5px;" width="5" height="6" viewBox="0 0 5 6"><path d="M0.5 0.5L4.5 3L0.5 5.5Z" fill="#6a6a6a"/></svg>
<div style="left:746px;top:320.5px;width:278px;height:1px;background:#2a2a2a;"></div>
<div style="left:746px;top:321.5px;width:278px;height:7.5px;background:#383838;"></div>
<div style="left:746px;top:328.5px;width:278px;height:1px;background:#2a2a2a;"></div>
<div style="left:809px;top:335.3px;width:151.8px;height:14.2px;background:#585858;border-radius:2.5px"></div>
<span class="t" style="left:884.9px;top:339.02px;font-size:8.6px;line-height:8.6px;color:#d2d2d2;font-weight:400;transform:translateX(-50%)">Add Component</span>
<div style="left:0px;top:534.5px;width:1024px;height:14.5px;background:#191919;"></div>
<div style="left:955px;top:535px;width:0.8px;height:14px;background:#262626;"></div>
<div style="left:971.3px;top:535px;width:0.8px;height:14px;background:#262626;"></div>
<div style="left:988.5px;top:535px;width:0.8px;height:14px;background:#262626;"></div>
<div style="left:1006.5px;top:535px;width:0.8px;height:14px;background:#262626;"></div>
<svg style="left:957.7px;top:537.9px;" width="10" height="9.5" viewBox="0 0 10 9.5"><path d="M2.5 2.5L5 1.2L7.5 2.5L8.5 5L7.5 8.3L5 9.2L2.5 8.3L1.5 5Z" fill="#bdbdbd"/><path d="M0.8 0.8L9.2 9" stroke="#191919" stroke-width="1.2"/><path d="M1.5 1.2L9.5 9.2" stroke="#bdbdbd" stroke-width="0.7"/></svg>
<svg style="left:975.6px;top:537.9px;" width="9" height="9.5" viewBox="0 0 9 9.5"><ellipse cx="4.5" cy="2" rx="4" ry="1.6" fill="#bdbdbd"/><path d="M0.5 3V7.5A4 1.6 0 0 0 8.5 7.5V3A4 1.6 0 0 1 0.5 3Z" fill="#bdbdbd"/><path d="M0.5 5H8.5" stroke="#191919" stroke-width="0.8"/><path d="M1 1L9 9" stroke="#191919" stroke-width="0.8"/></svg>
<svg style="left:992.8px;top:537.9px;" width="10" height="9.5" viewBox="0 0 10 9.5"><rect x="1.5" y="1.5" width="7" height="6.5" fill="none" stroke="#bdbdbd" stroke-width="1.2"/><path d="M3 3.5H7M3 5.5H7" stroke="#bdbdbd" stroke-width="0.9"/><path d="M0.5 0.5L9.5 9" stroke="#bdbdbd" stroke-width="0.9"/></svg>
<svg style="left:1009.2px;top:537.3px;" width="10.5" height="10.5" viewBox="0 0 10.5 10.5"><circle cx="5.1" cy="5.2" r="4.6" fill="none" stroke="#bdbdbd" stroke-width="0.9"/><path d="M3 5.3L4.6 6.8L7.4 3.8" fill="none" stroke="#bdbdbd" stroke-width="1"/></svg>
<svg style="left:2px;top:538px;" width="10" height="9" viewBox="0 0 10 9"><path d="M5 0.5L9.6 8.5H0.4Z" fill="#f4bc02"/><rect x="4.5" y="3" width="1" height="3" fill="#191919"/><rect x="4.5" y="6.6" width="1" height="1" fill="#191919"/></svg>
<span class="t" style="left:13.5px;top:538.20px;font-size:8.62px;line-height:8.62px;color:#dcae1d;font-weight:400;">Visual Studio Editor Package version 2.0.11 is available, we strongly encourage you to update from the Unity Package Manager for a better Visual Studio integration</span>
</body></html>
